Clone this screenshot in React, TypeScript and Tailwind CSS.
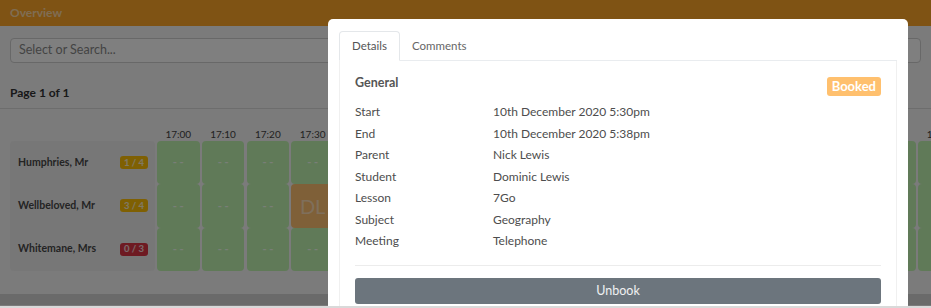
import React from "react";

const times = [
  "17:00", "17:10", "17:20", "17:30", "17:40", "17:50",
  "18:00", "18:10", "18:20", "18:30", "18:40", "18:50",
  "19:00", "19:10", "19:20", "19:30", "19:40", "19:50",
];

const teachers = [
  { name: "Humphries, Mr", count: "1 / 4", badge: "bg-[#ffc107]" },
  { name: "Wellbeloved, Mr", count: "3 / 4", badge: "bg-[#ffc107]" },
  { name: "Whitemane, Mrs", count: "0 / 3", badge: "bg-[#dc3545]" },
];

const details = [
  ["Start", "10th December 2020 5:30pm"],
  ["End", "10th December 2020 5:38pm"],
  ["Parent", "Nick Lewis"],
  ["Student", "Dominic Lewis"],
  ["Lesson", "7Go"],
  ["Subject", "Geography"],
  ["Meeting", "Telephone"],
];

const Slot: React.FC<{ booked?: string }> = ({ booked }) => {
  if (booked) {
    return (
      <div className="h-[43.33px] rounded-[4px] bg-[#ffc070] flex items-center justify-center text-[20px] text-white/50">
        {booked}
      </div>
    );
  }
  return (
    <div className="h-[43.33px] rounded-[4px] bg-[#c0f5b0] flex items-center justify-center text-[11px] font-bold text-white/80">
      - -
    </div>
  );
};

const Overview = () => {
  return (
    <div className="w-[931px] h-[308px] bg-[#f6f6f6] text-[#333]">
      <div className="h-[26px] bg-[#fea628] px-[10px] flex items-center text-[12px] font-bold text-white/60">
        Overview
      </div>
      <div className="px-[10px] pt-[12px]">
        <div className="h-[25px] w-[911px] border border-[#d0d0d0] rounded-[4px] bg-white px-[8px] flex items-center text-[12.5px] text-[#888]">
          Select or Search...
        </div>
        <div className="mt-[22px] h-[15px] leading-[15px] text-[12px] font-bold text-[#333]">Page 1 of 1</div>
      </div>
      <div className="mt-[8px] h-px bg-[#dadada]" />
      <div className="px-[10px] pt-[18px]">
        <div className="flex h-[14px] leading-[14px] text-[10px] text-[#444]">
          <div className="w-[147px] shrink-0" />
          <div className="flex gap-[2.2px]">
            {times.map((t) => (
              <div key={t} className="w-[42.6px] shrink-0 text-center">{t}</div>
            ))}
          </div>
        </div>
        <div className="flex">
          <div className="w-[145px] shrink-0 rounded-[4px] bg-[#efefef]">
            {teachers.map((t) => (
              <div key={t.name} className="h-[43.33px] flex items-center justify-between pl-[8px] pr-[7px]">
                <span className="text-[10.5px] font-bold text-[#484848]">{t.name}</span>
                <span className={`${t.badge} rounded-[3px] h-[13px] px-[4px] flex items-center text-[9.5px] font-bold text-white/80`}>
                  {t.count}
                </span>
              </div>
            ))}
          </div>
          <div className="ml-[2px] flex gap-[2.2px]">
            {times.map((t, i) => (
              <div key={t} className="w-[42.6px] shrink-0 flex flex-col">
                <Slot />
                <Slot booked={i === 3 ? "DL" : undefined} />
                <Slot />
              </div>
            ))}
          </div>
        </div>
      </div>
      <div className="mt-[23px] h-[11px] bg-[#d4d4d4]" />
    </div>
  );
};

const Modal = () => {
  return (
    <div className="absolute left-[328px] top-[19px] w-[580px] h-[300px] bg-white rounded-[5px] px-[11px] pt-[12px] text-[#4d4d4d]">
      <div className="flex h-[30px] border-b border-[#e9ecef] text-[11.5px]">
        <div className="h-[30px] px-[12px] flex items-center border border-[#e4e7ea] border-b-white rounded-t-[4px] bg-white text-[#555]">
          Details
        </div>
        <div className="h-[30px] px-[12px] flex items-center text-[#666]">Comments</div>
      </div>
      <div className="border border-t-0 border-[#f0f0f0] px-[15px] pt-[14px] pb-[20px]">
        <div className="flex justify-between items-start">
          <div className="leading-[16px] text-[12.5px] font-bold text-[#555]">General</div>
          <div className="mt-[2px] h-[19px] px-[5px] rounded-[3px] bg-[#ffc06e] flex items-center text-[13px] font-bold text-white">
            Booked
          </div>
        </div>
        <div className="mt-[5px] grid grid-cols-[138px_1fr] text-[12px] leading-[21.5px]">
          {details.map(([k, v]) => (
            <React.Fragment key={k}>
              <div>{k}</div>
              <div>{v}</div>
            </React.Fragment>
          ))}
        </div>
        <div className="mt-[13.5px] border-t border-[#ececec]" />
        <div className="mt-[12px] h-[26px] rounded-[3px] bg-[#6c757d] flex items-center justify-center text-[12.5px] text-white/90">
          Unbook
        </div>
      </div>
    </div>
  );
};

export default function App() {
  return (
    <div className="relative w-[931px] h-[308px] overflow-hidden font-['Lato',sans-serif]">
      <Overview />
      <div className="absolute inset-0 bg-black/50" />
      <Modal />
      <div className="absolute left-0 right-0 bottom-0 h-[2px] bg-[#d9d9d9]" />
    </div>
  );
}
